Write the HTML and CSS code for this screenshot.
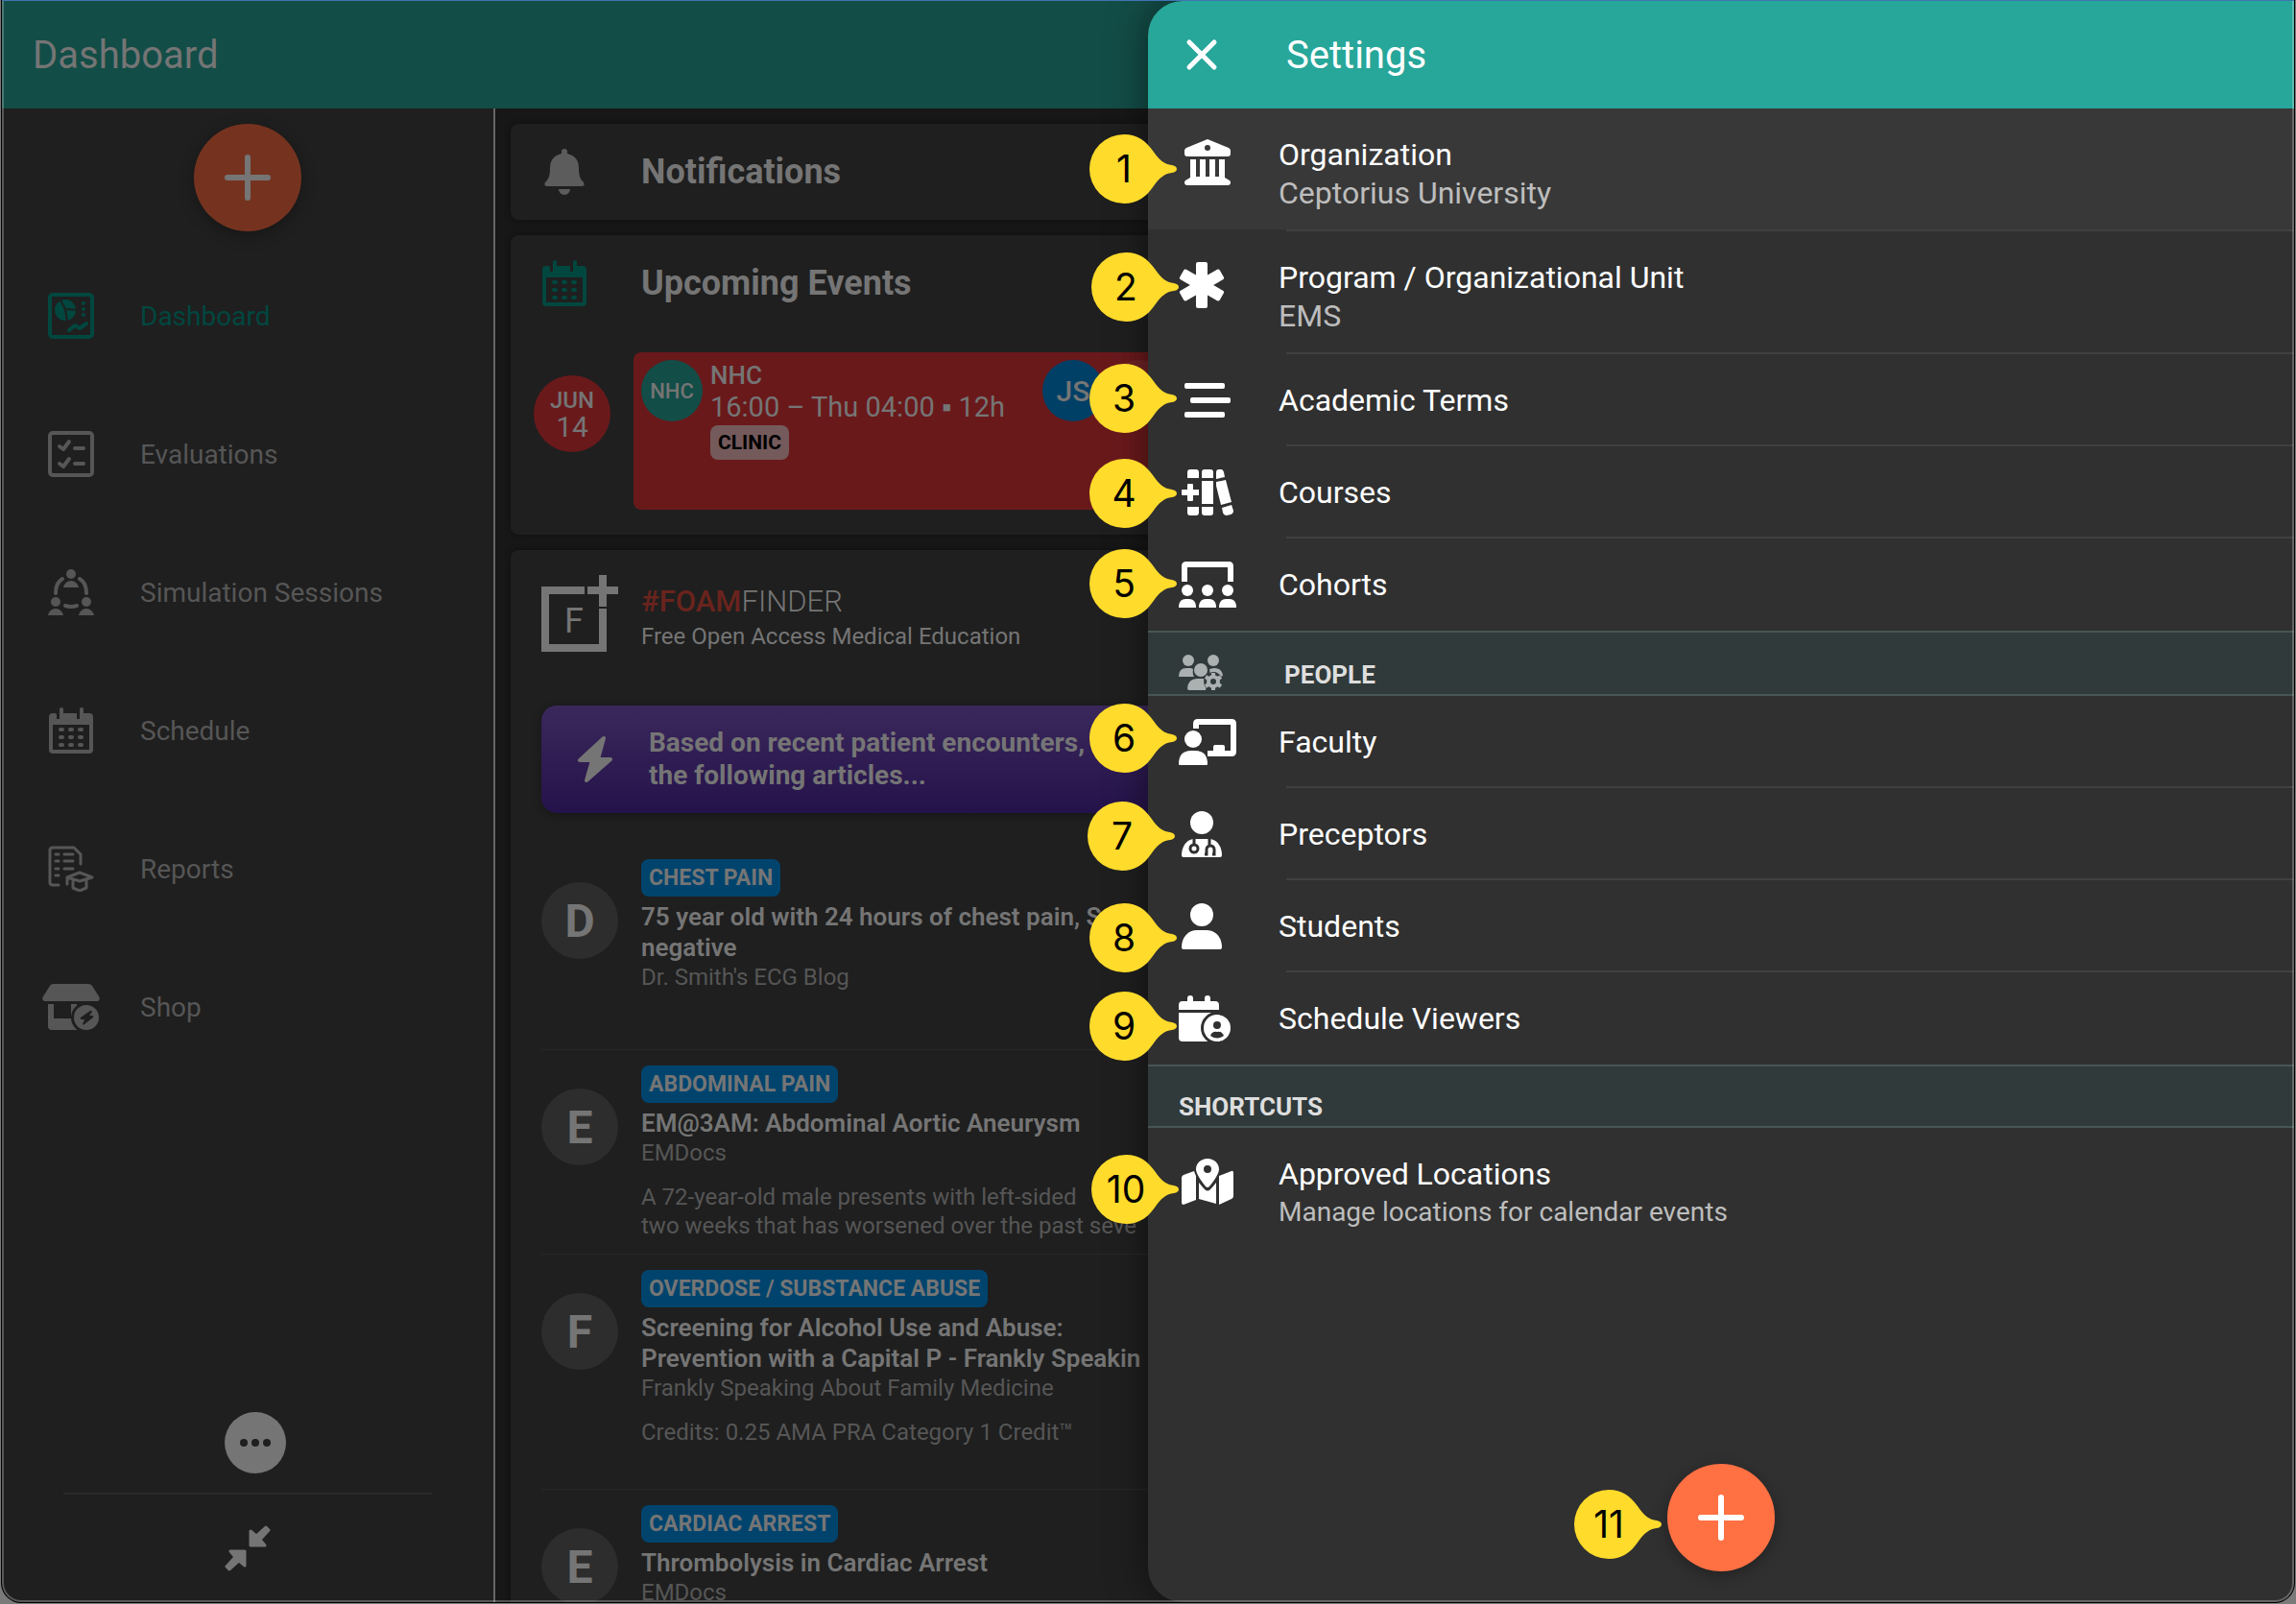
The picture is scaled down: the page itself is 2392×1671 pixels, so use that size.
FILE: index.html
```html
<!DOCTYPE html>
<html lang="en">
  <head>
    <meta charset="utf-8">
    <title>Dashboard</title>
    <link rel="stylesheet" href="styles.css">
  </head>
  <body>
    <!-- shapes used more than once -->
    <svg class="defs" aria-hidden="true">
      <symbol id="plus" viewBox="0 0 48 48">
        <path d="M24 3v42M3 24h42" fill="none" stroke="currentColor" stroke-width="6" stroke-linecap="round"/>
      </symbol>
      <symbol id="calendar" viewBox="0 0 46 48">
        <path fill-rule="evenodd" d="M4 6h2a2 2 0 0 1 2 2v4h3V2a2 2 0 0 1 4 0v4h14v6h3V2a2 2 0 0 1 4 0v4h6a4 4 0 0 1 4 4v34a4 4 0 0 1-4 4H4a4 4 0 0 1-4-4V10a4 4 0 0 1 4-4zM4 18v26h38V18z"/>
        <path d="M12 23h2M22 23h2M32 23h2M12 31h2M22 31h2M32 31h2M12 39h2M22 39h2M32 39h2" stroke="currentColor" stroke-width="4" stroke-linecap="round"/>
      </symbol>
      <symbol id="pin" viewBox="0 0 91 72">
        <path d="M36 0C50 0 59 7 66 17C73 27 78 31 86 32Q91 33 91 36Q91 39 86 40C78 41 73 45 66 55C59 65 50 72 36 72A36 36 0 0 1 36 0z"/>
      </symbol>
    </svg>

    <div class="app">
      <header class="topbar"><h1>Dashboard</h1></header>

      <div class="main">
        <nav class="sidebar">
          <button class="fab fab-dim" aria-label="Add"><svg><use href="#plus"/></svg></button>
          <ul class="nav">
            <li><a href="#" class="active">
              <svg viewBox="0 0 60 48">
                <rect x="8" y="2" width="44" height="44" rx="3" fill="none" stroke="currentColor" stroke-width="4"/>
                <circle cx="24" cy="18" r="11"/>
                <path class="cut" d="M18 6l6 11 13 1M24 17l2 13" fill="none" stroke-width="2"/>
                <circle cx="43" cy="11" r="2"/><circle cx="43" cy="17" r="2"/><circle cx="43" cy="23" r="2"/>
                <path d="M28 39l6-5 5 3 7-5" fill="none" stroke="currentColor" stroke-width="4" stroke-linecap="round" stroke-linejoin="round"/>
              </svg>Dashboard</a></li>
            <li><a href="#">
              <svg viewBox="0 0 60 48">
                <g fill="none" stroke="currentColor" stroke-width="4" stroke-linecap="round" stroke-linejoin="round">
                  <rect x="8" y="2" width="44" height="44" rx="3"/>
                  <path d="M18 16l4 3 6-8M18 34l4 3 6-8"/>
                  <path d="M34 18h9M34 34h9"/>
                </g>
              </svg>Evaluations</a></li>
            <li><a href="#">
              <svg viewBox="0 0 60 48">
                <circle cx="30" cy="5" r="5"/><circle cx="14" cy="34" r="5"/><circle cx="46" cy="34" r="5"/>
                <path d="M22 19c1-4 4-7 8-7s7 3 8 7zM6 48c1-4 4-7 8-7s7 3 8 7zM38 48c1-4 4-7 8-7s7 3 8 7z"/>
                <path d="M21 10c-5 3-7 8-7 15M39 10c5 3 7 8 7 15M24 38q6 2 12 0" fill="none" stroke="currentColor" stroke-width="4" stroke-linecap="round"/>
              </svg>Simulation Sessions</a></li>
            <li><a href="#"><svg class="cal"><use href="#calendar"/></svg>Schedule</a></li>
            <li><a href="#">
              <svg viewBox="0 0 60 48">
                <g fill="none" stroke="currentColor" stroke-width="3" stroke-linecap="round" stroke-linejoin="round">
                  <path d="M17 41h-6q-3 0-3-3V5q0-3 3-3h22l7 7v10"/>
                  <path d="M14 9h3M23 9h9M14 16h3M23 16h9M14 24h3M23 24h9M14 31h3"/>
                  <path d="M26 33l13-5 13 5-13 4zM32 36v8l7 3 7-3v-8M26 33v7"/>
                </g>
              </svg>Reports</a></li>
            <li><a href="#">
              <svg viewBox="0 0 60 48">
                <path d="M12 0h36q3 0 4 2l7 11q2 3-1 5H2q-3-2-1-5L8 2q1-2 4-2z"/>
                <path d="M6 21h6v15h18V21h6v27H10q-4 0-4-4z"/>
                <circle class="cut-fill" cx="46" cy="35" r="16"/>
                <circle cx="46" cy="35" r="13"/>
                <path class="cut-fill" d="M50 28L40 35q-1 2 1 2h3l-2 5q1 1 2 0l9-7q1-2-1-2h-3l3-4q-1-2-2-1z"/>
              </svg>Shop</a></li>
          </ul>
          <div class="sidebar-foot">
            <button class="more" aria-label="More"><i></i><i></i><i></i></button>
            <hr>
            <button class="collapse" aria-label="Collapse menu">
              <svg viewBox="0 0 48 48">
                <path d="M27 6l6 5 10-9 3 3-9 10 5 6H27zM21 42l-6-5-10 9-3-3 9-10-5-6h15z" stroke="currentColor" stroke-width="3" stroke-linejoin="round"/>
              </svg>
            </button>
          </div>
        </nav>

        <main class="content">
          <section class="card card-head">
            <div class="head-icon">
              <svg class="bell" viewBox="0 0 42 48"><path d="M21 0a3 3 0 0 1 3 3v2c8 2 12 7 12 15 0 9 2 12 5 15q2 4-2 4H3q-4 0-2-4c3-3 5-6 5-15C6 12 10 7 18 5V3a3 3 0 0 1 3-3zM15 42h12a6 6 0 0 1-12 0z"/></svg>
            </div>
            <h2>Notifications</h2>
          </section>

          <section class="card">
            <div class="card-head">
              <div class="head-icon teal"><svg class="cal"><use href="#calendar"/></svg></div>
              <h2>Upcoming Events</h2>
            </div>
            <div class="event-row">
              <div class="date"><b>JUN</b><span>14</span></div>
              <div class="event">
                <span class="avatar avatar-site">NHC</span>
                <div class="event-text">
                  <strong>NHC</strong>
                  <span>16:00 – Thu 04:00 ▪ 12h</span>
                  <em>CLINIC</em>
                </div>
                <span class="avatar avatar-user">JS</span>
                <span class="avatar avatar-empty"></span>
              </div>
            </div>
          </section>

          <section class="card foam">
            <div class="foam-head">
              <svg class="logo" viewBox="0 0 80 80">
                <path d="M0 12h45v8H8v52h52V35h8v45H0zM60 0h8v12h12v8H68v13h-8V20H48v-8h12z"/>
                <text x="24" y="60">F</text>
              </svg>
              <div>
                <h3><b>#FOAM</b>FINDER</h3>
                <p>Free Open Access Medical Education</p>
              </div>
            </div>
            <div class="banner">
              <svg viewBox="0 0 36 48"><path d="M27 2L2 25h13L9 46l25-22H21z" stroke="currentColor" stroke-width="4" stroke-linejoin="round"/></svg>
              <p>Based on recent patient encounters,<br>the following articles...</p>
            </div>

            <article>
              <span class="letter">D</span>
              <div class="article-text">
                <span class="tag">CHEST PAIN</span>
                <h4>75 year old with 24 hours of chest pain, S<br>negative</h4>
                <cite>Dr. Smith's ECG Blog</cite>
              </div>
            </article>
            <article>
              <span class="letter">E</span>
              <div class="article-text">
                <span class="tag">ABDOMINAL PAIN</span>
                <h4>EM@3AM: Abdominal Aortic Aneurysm</h4>
                <cite>EMDocs</cite>
                <p>A 72-year-old male presents with left-sided<br>two weeks that has worsened over the past seve</p>
              </div>
            </article>
            <article>
              <span class="letter">F</span>
              <div class="article-text">
                <span class="tag">OVERDOSE / SUBSTANCE ABUSE</span>
                <h4>Screening for Alcohol Use and Abuse:<br>Prevention with a Capital P - Frankly Speakin</h4>
                <cite>Frankly Speaking About Family Medicine</cite>
                <p>Credits: 0.25 AMA PRA Category 1 Credit™</p>
              </div>
            </article>
            <article>
              <span class="letter">E</span>
              <div class="article-text">
                <span class="tag">CARDIAC ARREST</span>
                <h4>Thrombolysis in Cardiac Arrest</h4>
                <cite>EMDocs</cite>
              </div>
            </article>
          </section>
        </main>
      </div>

      <aside class="drawer">
        <header class="drawer-head">
          <button class="close" aria-label="Close">
            <svg viewBox="0 0 48 48"><path d="M11 11l26 26M37 11L11 37" fill="none" stroke="currentColor" stroke-width="5" stroke-linecap="round"/></svg>
          </button>
          <h2>Settings</h2>
        </header>

        <ul class="settings">
          <li><a href="#" class="two-line selected">
            <svg viewBox="0 0 60 48">
              <path fill-rule="evenodd" d="M30 0l22 9q2 1 2 3v3q0 3-3 3H9q-3 0-3-3v-3q0-2 2-3zM30 6a3 3 0 0 0 0 6 3 3 0 0 0 0-6z"/>
              <path d="M12 21h6v18h4V21h6v18h4V21h6v18h4V21h6v19l5 3q1 1 1 2 0 3-3 3H9q-3 0-3-3 0-1 1-2l5-3z"/>
            </svg>
            <div><span>Organization</span><small>Ceptorius University</small></div></a></li>
          <li><a href="#" class="two-line">
            <svg viewBox="0 0 60 48">
              <rect x="18" width="12" height="48" rx="2"/>
              <rect x="18" width="12" height="48" rx="2" transform="rotate(60 24 24)"/>
              <rect x="18" width="12" height="48" rx="2" transform="rotate(120 24 24)"/>
            </svg>
            <div><span>Program / Organizational Unit</span><small>EMS</small></div></a></li>
          <li><a href="#">
            <svg viewBox="0 0 60 48"><rect x="6" y="6" width="42" height="6" rx="2"/><rect x="12" y="21" width="42" height="6" rx="2"/><rect x="6" y="36" width="42" height="6" rx="2"/></svg>
            <span>Academic Terms</span></a></li>
          <li><a href="#">
            <svg viewBox="0 0 60 48">
              <path d="M9 9V3q0-3 3-3h6q3 0 3 3v6zM9 39h12v6q0 3-3 3h-6q-3 0-3-3zM24 9V3q0-3 3-3h6q3 0 3 3v6zM24 39h12v6q0 3-3 3h-6q-3 0-3-3zM24 12h12v24H24z"/>
              <path d="M10 15h4q1 0 1 1v5h6v6h-6v5q0 1-1 1h-4q-1 0-1-1v-5H4q-1 0-1-1v-4q0-1 1-1h5v-5q0-1 1-1z"/>
              <path d="M39 9V3q0-3 3-3 4-1 5 3l1 5-9 2zM39 13l10-2 6 23-11 3-5-20zM45 40l10-3 2 6q0 3-3 4l-4 1q-3 0-4-3z"/>
            </svg>
            <span>Courses</span></a></li>
          <li><a href="#">
            <svg viewBox="0 0 60 48">
              <path d="M6 21V5q0-2 2-2h44q2 0 2 2v16" fill="none" stroke="currentColor" stroke-width="6"/>
              <circle cx="9" cy="30" r="6"/><circle cx="30" cy="30" r="6"/><circle cx="51" cy="30" r="6"/>
              <path d="M0 48v-2q1-7 7-7h4q6 0 7 7v2zM21 48v-2q1-7 7-7h4q6 0 7 7v2zM42 48v-2q1-7 7-7h4q6 0 7 7v2z"/>
            </svg>
            <span>Cohorts</span></a></li>
        </ul>

        <h3 class="group group-icon">
          <svg viewBox="0 0 46 37">
            <circle cx="10" cy="6" r="6"/><circle cx="36" cy="6" r="6"/><circle cx="23" cy="16" r="7"/>
            <path d="M0 23q0-9 8-9h4q3 0 3 2-1 4 1 7zM31 23q2-4 1-8l5-1q8 0 9 8l-2 1-6-5zM9 35q1-10 10-10h7l3 7-1 5H11q-2 0-2-2z"/>
            <circle class="gear-gap" cx="36" cy="28" r="10"/>
            <circle cx="36" cy="28" r="5" fill="none" stroke="currentColor" stroke-width="4"/>
            <path d="M36 19v3M36 34v3M28 23l3 2M41 31l3 2M28 33l3-2M41 25l3-2" stroke="currentColor" stroke-width="4"/>
          </svg>
          PEOPLE
        </h3>
        <ul class="settings">
          <li><a href="#">
            <svg viewBox="0 0 60 48">
              <path d="M18 10V5q0-2 2-2h35q2 0 2 2v29q0 2-2 2H30" fill="none" stroke="currentColor" stroke-width="6"/>
              <path d="M36 36v-7q0-2 2-2h8q2 0 2 2v7z"/>
              <circle class="cut-drawer" cx="15" cy="21" r="11"/>
              <circle cx="15" cy="21" r="9"/>
              <path d="M0 47q0-14 13-14h4q13 0 13 14 0 1-1 1H1q-1 0-1-1z"/>
            </svg>
            <span>Faculty</span></a></li>
          <li><a href="#">
            <svg viewBox="0 0 60 48">
              <circle cx="24" cy="12" r="12"/>
              <path d="M3 46c0-9 5-16 12-17h18c7 1 12 8 12 17q0 2-2 2H5q-2 0-2-2z"/>
              <g class="cut-line" fill="none" stroke-width="3">
                <path d="M16 28v7M32 28v7M27 45h2v-5a4 4 0 0 1 8 0v5h-2"/>
                <circle cx="16" cy="39" r="4"/>
              </g>
            </svg>
            <span>Preceptors</span></a></li>
          <li><a href="#">
            <svg viewBox="0 0 60 48"><circle cx="24" cy="12" r="12"/><path d="M3 46c0-11 7-18 16-18h10c9 0 16 7 16 18q0 2-2 2H5q-2 0-2-2z"/></svg>
            <span>Students</span></a></li>
          <li><a href="#">
            <svg viewBox="0 0 60 48">
              <path d="M0 15v-5q0-4 4-4h5V3a3 3 0 0 1 6 0v3h12V3a3 3 0 0 1 6 0v3h5q4 0 4 4v5zM0 18h42v30H4q-4 0-4-4z"/>
              <circle class="cut-drawer" cx="40" cy="34" r="17"/>
              <circle cx="40" cy="34" r="14"/>
              <circle class="cut-drawer" cx="40" cy="31" r="4"/>
              <path class="cut-drawer" d="M33 42q2-5 7-4 5-1 7 4-7 5-14 0z"/>
            </svg>
            <span>Schedule Viewers</span></a></li>
        </ul>

        <h3 class="group">SHORTCUTS</h3>
        <ul class="settings">
          <li><a href="#" class="two-line">
            <svg viewBox="0 0 60 48">
              <path d="M3 20q0-2 2-3l11-4q1 3 2 5v25L5 48q-2 0-2-2zM21 25q4 5 6 7 3 3 6 0 3-3 6-7v22l-18-5zM42 18l13-5q2-1 2 2v24q0 2-2 3l-13 6z"/>
              <path fill-rule="evenodd" d="M30 0c7 0 12 5 12 11 0 5-6 13-10 18q-2 2-4 0C24 24 18 16 18 11 18 5 23 0 30 0zM30 7a4 4 0 0 0 0 8 4 4 0 0 0 0-8z"/>
            </svg>
            <div><span>Approved Locations</span><small class="note">Manage locations for calendar events</small></div></a></li>
        </ul>

        <button class="fab" aria-label="Add"><svg><use href="#plus"/></svg></button>

        <!-- numbered pins -->
        <div class="pin pin-1"><svg><use href="#pin"/></svg><b>1</b></div>
        <div class="pin pin-2"><svg><use href="#pin"/></svg><b>2</b></div>
        <div class="pin pin-3"><svg><use href="#pin"/></svg><b>3</b></div>
        <div class="pin pin-4"><svg><use href="#pin"/></svg><b>4</b></div>
        <div class="pin pin-5"><svg><use href="#pin"/></svg><b>5</b></div>
        <div class="pin pin-6"><svg><use href="#pin"/></svg><b>6</b></div>
        <div class="pin pin-7"><svg><use href="#pin"/></svg><b>7</b></div>
        <div class="pin pin-8"><svg><use href="#pin"/></svg><b>8</b></div>
        <div class="pin pin-9"><svg><use href="#pin"/></svg><b>9</b></div>
        <div class="pin pin-10"><svg><use href="#pin"/></svg><b>10</b></div>
        <div class="pin pin-11"><svg><use href="#pin"/></svg><b>11</b></div>
      </aside>
    </div>
  </body>
</html>
```
FILE: styles.css
```css
* {
  box-sizing: border-box;
}

body {
  margin: 0;
  padding: 0 2px 2px;
  height: 100vh;
  background: #7a7a7a;
  font-family: Roboto, "Liberation Sans", sans-serif;
  color: #757575;
  overflow: hidden;
}

h1, h2, h3, h4, p, ul {
  margin: 0;
  padding: 0;
}

ul {
  list-style: none;
}

a {
  color: inherit;
  text-decoration: none;
}

button {
  padding: 0;
  border: none;
  background: none;
  color: inherit;
  font: inherit;
  cursor: pointer;
}

svg {
  display: block;
  flex: none;
  fill: currentColor;
}

.defs {
  position: absolute;
  width: 0;
  height: 0;
}

.app {
  position: relative;
  display: flex;
  flex-direction: column;
  height: 100%;
  border-top: 1px solid #3f74b3;
  border-radius: 0 0 20px 20px;
  box-shadow: 0 0 0 1px #000;
  background: #171717;
  overflow: hidden;
}

/* window edge */
.app::after {
  content: "";
  position: absolute;
  inset: 0;
  border: 2px solid rgba(255, 255, 255, 0.25);
  border-top: none;
  border-radius: 0 0 20px 20px;
  pointer-events: none;
}

.topbar {
  display: flex;
  align-items: center;
  flex: none;
  height: 112px;
  padding: 0 32px;
  background: #134d47;
}

.topbar h1 {
  font-size: 40px;
  font-weight: 400;
}

.main {
  display: flex;
  flex: 1;
  min-height: 0;
}

/* sidebar */
.sidebar {
  display: flex;
  flex-direction: column;
  align-items: center;
  flex: none;
  width: 514px;
  padding: 16px 0 32px;
  border-right: 2px solid #666;
  background: #1f1f1f;
}

.fab {
  display: flex;
  align-items: center;
  justify-content: center;
  flex: none;
  width: 112px;
  height: 112px;
  border-radius: 50%;
  background: #ff7043;
  color: #fff;
  box-shadow: 0 4px 16px rgba(0, 0, 0, 0.3);
}

.fab svg {
  width: 48px;
  height: 48px;
}

.fab-dim {
  background: #75331f;
  color: #757575;
}

.nav {
  width: 100%;
  margin-top: 16px;
}

.nav a {
  display: flex;
  align-items: center;
  gap: 42px;
  height: 144px;
  padding-left: 42px;
  font-size: 28px;
  color: #565656;
}

.nav a.active {
  color: #00473f;
}

.nav svg {
  width: 60px;
  height: 48px;
}

.cut {
  stroke: #1f1f1f;
}

.cut-fill {
  fill: #1f1f1f;
}

.sidebar-foot {
  display: flex;
  flex-direction: column;
  align-items: center;
  width: 100%;
  margin-top: auto;
  padding: 0 64px;
}

.more {
  display: flex;
  align-items: center;
  justify-content: center;
  gap: 4px;
  width: 64px;
  height: 64px;
  margin-left: 16px;
  border-radius: 50%;
  background: #757575;
}

.more i {
  width: 8px;
  height: 8px;
  border-radius: 50%;
  background: #1f1f1f;
}

.sidebar-foot hr {
  width: 100%;
  height: 2px;
  margin: 20px 0 32px;
  border: none;
  background: #2a2a2a;
}

.collapse svg {
  width: 48px;
  height: 48px;
}

/* dashboard cards */
.content {
  display: flex;
  flex-direction: column;
  gap: 16px;
  flex: 1;
  min-width: 0;
  padding: 16px;
  overflow: hidden;
  white-space: nowrap;
}

.card {
  flex: none;
  border-radius: 8px;
  background: #1f1f1f;
  box-shadow: 0 0 6px rgba(0, 0, 0, 0.4);
}

.card-head {
  display: flex;
  align-items: center;
  height: 100px;
}

.card-head h2 {
  font-size: 36px;
  font-weight: 700;
}

.head-icon {
  display: flex;
  justify-content: center;
  width: 80px;
  margin: 0 40px 0 16px;
  color: #5c5c5c;
}

.head-icon svg {
  height: 48px;
}

.head-icon.teal {
  color: #00473f;
}

.bell {
  width: 42px;
}

.cal {
  width: 46px;
}

.event-row {
  display: flex;
  align-items: flex-start;
  gap: 24px;
  padding: 22px 24px 26px;
}

.date {
  display: flex;
  flex-direction: column;
  align-items: center;
  justify-content: center;
  flex: none;
  width: 80px;
  height: 80px;
  margin-top: 24px;
  border-radius: 50%;
  background: #6a191b;
  font-size: 30px;
  line-height: 28px;
}

.date b {
  font-size: 24px;
  font-weight: 500;
}

.event {
  display: flex;
  align-items: flex-start;
  flex: 1;
  height: 164px;
  padding: 8px;
  border-radius: 8px;
  background: #6a191b;
}

.avatar {
  display: flex;
  align-items: center;
  justify-content: center;
  flex: none;
  width: 64px;
  height: 64px;
  border-radius: 50%;
  font-weight: 500;
}

.avatar-site {
  background: #134d47;
  font-size: 22px;
}

.avatar-user {
  background: #003f66;
  font-size: 30px;
}

.avatar-empty {
  margin-left: 4px;
  background: #702325;
}

.event-text {
  display: flex;
  flex-direction: column;
  align-items: flex-start;
  width: 346px;
  margin-left: 8px;
  font-size: 29px;
  line-height: 34px;
}

.event-text strong {
  font-size: 26px;
  font-weight: 500;
  line-height: 32px;
}

.event-text em {
  margin-top: 2px;
  padding: 0 8px;
  border-radius: 8px;
  background: #755a5b;
  color: #000;
  font-size: 21px;
  font-style: normal;
  font-weight: 700;
  line-height: 36px;
}

.foam {
  padding: 26px 32px 32px;
}

.foam-head {
  display: flex;
  gap: 24px;
}

.logo {
  width: 80px;
  height: 80px;
}

.logo text {
  font-size: 36px;
}

.foam-head h3 {
  margin-top: 8px;
  font-size: 31px;
  font-weight: 300;
  line-height: 40px;
}

.foam-head h3 b {
  color: #6a241d;
  font-weight: 500;
}

.foam-head p {
  font-size: 24px;
  line-height: 32px;
}

.banner {
  display: flex;
  align-items: center;
  gap: 38px;
  height: 112px;
  margin: 56px 0 32px;
  padding: 0 38px;
  border-radius: 16px;
  background: linear-gradient(#3b285b, #24124a);
  box-shadow: 0 2px 10px rgba(0, 0, 0, 0.3);
  font-size: 28px;
  font-weight: 700;
  line-height: 34px;
}

.banner svg {
  width: 36px;
  height: 48px;
}

article {
  display: flex;
  gap: 24px;
  min-height: 215px;
  padding: 16px 0 14px;
  border-bottom: 1px solid #282828;
}

article + article {
  min-height: 0;
}

.letter {
  display: flex;
  align-items: center;
  justify-content: center;
  flex: none;
  width: 80px;
  height: 80px;
  margin-top: 24px;
  border-radius: 50%;
  background: #2d2d2d;
  font-size: 48px;
  font-weight: 700;
}

.tag {
  display: block;
  width: fit-content;
  padding: 0 8px;
  margin-bottom: 5px;
  border-radius: 8px;
  background: #00446e;
  font-size: 23px;
  font-weight: 700;
  line-height: 39px;
}

article h4 {
  font-size: 26px;
  font-weight: 600;
  line-height: 32px;
}

article cite {
  display: block;
  font-size: 24px;
  font-style: normal;
  line-height: 30px;
  color: #565656;
}

article p {
  min-height: 60px;
  margin-top: 16px;
  font-size: 24px;
  line-height: 30px;
  color: #565656;
}

/* settings drawer */
.drawer {
  position: absolute;
  top: 0;
  right: 0;
  bottom: 0;
  display: flex;
  flex-direction: column;
  width: 50%;
  border-radius: 36px 0 0 36px;
  background: #303030;
  color: #fff;
  box-shadow: 0 0 40px rgba(0, 0, 0, 0.5);
}

.drawer-head {
  display: flex;
  align-items: center;
  flex: none;
  gap: 64px;
  height: 112px;
  padding: 0 32px;
  border-top-left-radius: 36px;
  background: #27a69a;
}

.drawer-head h2 {
  font-size: 40px;
  font-weight: 400;
}

.close svg {
  width: 48px;
  height: 48px;
}

.settings a {
  display: flex;
  align-items: center;
  gap: 44px;
  height: 96px;
  padding-left: 32px;
  font-size: 32px;
  line-height: 40px;
}

.settings a.two-line {
  align-items: flex-start;
  height: 128px;
  padding-top: 28px;
}

.settings a.selected {
  border-bottom: 2px solid transparent;
  background: #383838;
  background-clip: padding-box;
}

.settings svg {
  width: 60px;
  height: 48px;
}

.two-line svg {
  margin-top: 4px;
}

.settings span,
.settings small {
  display: block;
}

.settings small {
  font-size: 32px;
  color: #bdbdbd;
}

.settings small.note {
  font-size: 28px;
}

/* divider starts at the text column */
.settings li {
  background: linear-gradient(#404040, #404040) 144px 100% / 100% 2px no-repeat;
}

.settings li:last-child {
  background: none;
}

.group {
  display: flex;
  align-items: flex-end;
  flex: none;
  height: 66px;
  padding: 0 32px 4px;
  border: solid #465653;
  border-width: 2px 0;
  background: #303a3b;
  color: #dedede;
  font-size: 26px;
  font-weight: 700;
  line-height: 32px;
}

.group-icon {
  gap: 64px;
  height: 68px;
}

.group svg {
  width: 46px;
  height: 37px;
  color: #abb0b0;
}

.gear-gap {
  fill: #303a3b;
}

.cut-drawer {
  fill: #303030;
}

.cut-line {
  stroke: #303030;
}

.drawer > .fab {
  margin: auto auto 32px;
}

/* pins lie over the drawer's left edge */
.pin {
  position: absolute;
  left: -61px;
  width: 91px;
  height: 72px;
  color: #000;
}

.pin svg {
  width: 91px;
  height: 72px;
  fill: #ffdb2b;
}

.pin b {
  position: absolute;
  top: 0;
  left: 0;
  width: 72px;
  font-family: Inter, Roboto, sans-serif;
  font-size: 39px;
  font-weight: 400;
  line-height: 72px;
  text-align: center;
}

.pin-1 { top: 139px; }
.pin-2 { top: 262px; left: -59px; }
.pin-3 { top: 378px; }
.pin-4 { top: 477px; }
.pin-5 { top: 571px; }
.pin-6 { top: 732px; }
.pin-7 { top: 834px; left: -63px; }
.pin-8 { top: 940px; }
.pin-9 { top: 1032px; }
.pin-10 { top: 1202px; left: -59px; }
.pin-11 { top: auto; bottom: 45px; left: calc(50% - 153px); }
```
